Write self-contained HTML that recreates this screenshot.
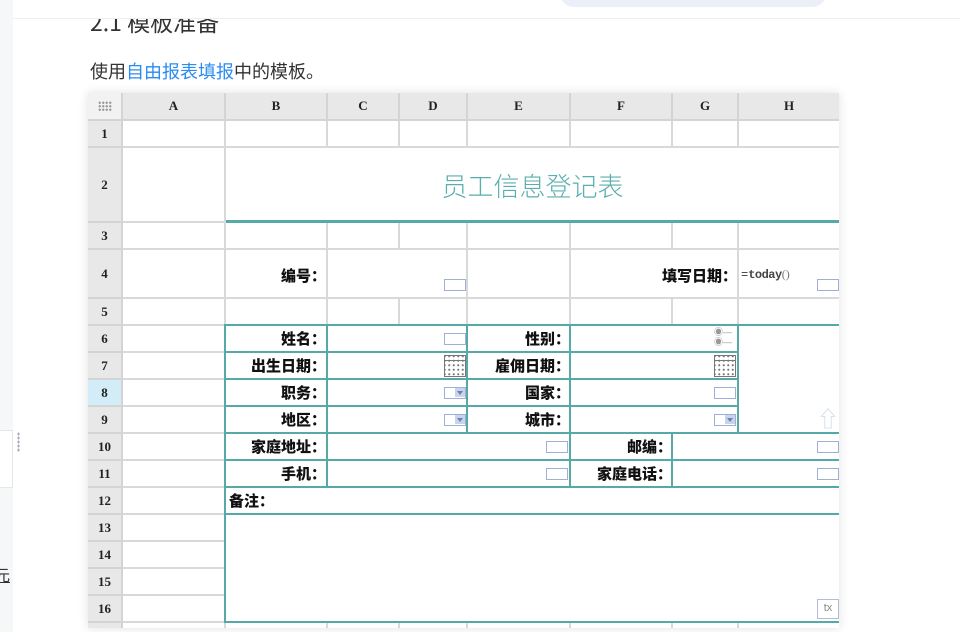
<!DOCTYPE html>
<html><head><meta charset="utf-8"><style>
*{margin:0;padding:0;box-sizing:border-box}
body{width:960px;height:632px;overflow:hidden;background:#fff;position:relative;font-family:"Liberation Sans","Noto Sans CJK SC",sans-serif}
.a{position:absolute}
.c{position:absolute;border-right:2px solid #d9d9d9;border-bottom:2px solid #d9d9d9;background:#fff}
.h{position:absolute;background:#e8e8e8;border-right:2px solid #d4d4d4;border-bottom:2px solid #d4d4d4;font-family:"Liberation Serif",serif;font-weight:bold;font-size:13px;color:#222;display:flex;align-items:center;justify-content:center}
.t{position:absolute;border-right:2px solid #55aaa7;border-bottom:2px solid #55aaa7}
.l{position:absolute;font-family:"Noto Sans CJK SC",sans-serif;font-weight:900;font-size:15px;color:#111;text-align:right;line-height:27px;padding-right:0px}
.bx{position:absolute;width:22px;height:12px;border:1.5px solid #9fb0d6;background:#fff}
.dd{position:absolute;width:22px;height:12px;border:1.5px solid #9fb0d6;background:#fff}
.dd:after{content:"";position:absolute;right:0;top:0;width:10px;height:9px;background:#c9d3ea}
.dd:before{content:"";position:absolute;right:2px;top:3px;border-left:3px solid transparent;border-right:3px solid transparent;border-top:4px solid #6a7fb8;z-index:1}
.cal{position:absolute;width:22px;height:22px;border:1.5px solid #777;background:#fff;background-image:radial-gradient(#777 0.9px,transparent 1.2px);background-size:4.5px 4.5px;background-position:2px 7px}
.cal:before{content:"";position:absolute;left:0;right:0;top:0;height:4px;border-bottom:1px solid #777}
</style></head><body>
<div class="a" style="left:0;top:0;width:13px;height:632px;background:#f6f7f9"></div>
<div class="a" style="left:0;top:430px;width:13px;height:58px;background:#fff;border:1px solid #e6e6e6;border-left:none"></div>
<div class="a" style="left:17px;top:432px;width:3px;height:20px;background-image:radial-gradient(#aab 1px,transparent 1.3px);background-size:3px 4px"></div>
<div class="a" style="left:-6px;top:562px;font-size:16px;color:#333;text-decoration:underline;font-family:'Noto Sans CJK SC',sans-serif">元</div>
<div class="a" style="left:13px;top:0;width:947px;height:19px;background:#fff;border-bottom:1px solid #eceef2;z-index:3"></div>
<div class="a" style="left:560px;top:-20px;width:266px;height:27px;background:#ebf0f8;border-radius:14px;z-index:4"></div>
<div class="a" style="left:90px;top:4px;font-size:23px;color:#333;font-family:'Noto Sans CJK SC',sans-serif;z-index:1">2.1 模板准备</div>
<div class="a" style="left:90px;top:58px;font-size:18px;color:#333;font-family:'Noto Sans CJK SC',sans-serif">使用<span style="color:#2a8cf0">自由报表填报</span>中的模板。</div>
<div class="a" style="left:88px;top:93px;width:751px;height:535px;background:#fff;box-shadow:0 0 10px rgba(0,0,0,.12)"></div>
<div class="h" style="left:88px;top:93px;width:35px;height:28px;background:#f2f2f2"><span style="width:14px;height:10px;background-image:radial-gradient(#999 1px,transparent 1.3px);background-size:3.5px 3.5px"></span></div>
<div class="h" style="left:123px;top:93px;width:103px;height:28px">A</div>
<div class="h" style="left:226px;top:93px;width:102px;height:28px">B</div>
<div class="h" style="left:328px;top:93px;width:72px;height:28px">C</div>
<div class="h" style="left:400px;top:93px;width:68px;height:28px">D</div>
<div class="h" style="left:468px;top:93px;width:103px;height:28px">E</div>
<div class="h" style="left:571px;top:93px;width:102px;height:28px">F</div>
<div class="h" style="left:673px;top:93px;width:66px;height:28px">G</div>
<div class="h" style="left:739px;top:93px;width:100px;height:28px;border-right:none">H</div>
<div class="h" style="left:88px;top:121px;width:35px;height:27px">1</div>
<div class="h" style="left:88px;top:148px;width:35px;height:75px">2</div>
<div class="h" style="left:88px;top:223px;width:35px;height:27px">3</div>
<div class="h" style="left:88px;top:250px;width:35px;height:49px">4</div>
<div class="h" style="left:88px;top:299px;width:35px;height:27px">5</div>
<div class="h" style="left:88px;top:326px;width:35px;height:27px">6</div>
<div class="h" style="left:88px;top:353px;width:35px;height:27px">7</div>
<div class="h" style="left:88px;top:380px;width:35px;height:27px;background:#d3edf8">8</div>
<div class="h" style="left:88px;top:407px;width:35px;height:27px">9</div>
<div class="h" style="left:88px;top:434px;width:35px;height:27px">10</div>
<div class="h" style="left:88px;top:461px;width:35px;height:27px">11</div>
<div class="h" style="left:88px;top:488px;width:35px;height:27px">12</div>
<div class="h" style="left:88px;top:515px;width:35px;height:27px">13</div>
<div class="h" style="left:88px;top:542px;width:35px;height:27px">14</div>
<div class="h" style="left:88px;top:569px;width:35px;height:27px">15</div>
<div class="h" style="left:88px;top:596px;width:35px;height:27px">16</div>
<div class="h" style="left:88px;top:623px;width:35px;height:5px;border-bottom:none"></div>
<div class="c" style="left:123px;top:121px;width:103px;height:27px"></div>
<div class="c" style="left:226px;top:121px;width:102px;height:27px"></div>
<div class="c" style="left:328px;top:121px;width:72px;height:27px"></div>
<div class="c" style="left:400px;top:121px;width:68px;height:27px"></div>
<div class="c" style="left:468px;top:121px;width:103px;height:27px"></div>
<div class="c" style="left:571px;top:121px;width:102px;height:27px"></div>
<div class="c" style="left:673px;top:121px;width:66px;height:27px"></div>
<div class="c" style="left:739px;top:121px;width:100px;height:27px;border-right:none"></div>
<div class="c" style="left:123px;top:148px;width:103px;height:75px"></div>
<div class="c" style="left:226px;top:148px;width:613px;height:75px;border-right:none;border-bottom:3px solid #55aaa7"></div>
<div class="a" style="left:226px;top:167px;width:613px;text-align:center;font-size:26px;color:#5aaeae;font-family:'Noto Sans CJK SC',sans-serif;font-weight:300">员工信息登记表</div>
<div class="c" style="left:123px;top:223px;width:103px;height:27px"></div>
<div class="c" style="left:226px;top:223px;width:102px;height:27px"></div>
<div class="c" style="left:328px;top:223px;width:72px;height:27px"></div>
<div class="c" style="left:400px;top:223px;width:68px;height:27px"></div>
<div class="c" style="left:468px;top:223px;width:103px;height:27px"></div>
<div class="c" style="left:571px;top:223px;width:102px;height:27px"></div>
<div class="c" style="left:673px;top:223px;width:66px;height:27px"></div>
<div class="c" style="left:739px;top:223px;width:100px;height:27px;border-right:none"></div>
<div class="c" style="left:123px;top:250px;width:103px;height:49px"></div>
<div class="c" style="left:226px;top:250px;width:102px;height:49px"></div>
<div class="c" style="left:328px;top:250px;width:140px;height:49px"></div>
<div class="c" style="left:468px;top:250px;width:103px;height:49px"></div>
<div class="c" style="left:571px;top:250px;width:168px;height:49px"></div>
<div class="c" style="left:739px;top:250px;width:100px;height:49px;border-right:none"></div>
<div class="l" style="left:226px;top:262px;width:100px">编号：</div>
<div class="bx" style="left:444px;top:279px"></div>
<div class="l" style="left:571px;top:262px;width:166px">填写日期：</div>
<div class="a" style="left:741px;top:267px;font-family:'Liberation Mono',monospace;font-size:12px;color:#333">=<span style="color:#444;font-weight:bold;letter-spacing:-.5px">today</span><span style="color:#777;font-family:'Liberation Serif',serif">()</span></div>
<div class="bx" style="left:817px;top:279px"></div>
<div class="c" style="left:123px;top:299px;width:103px;height:27px"></div>
<div class="c" style="left:226px;top:299px;width:102px;height:27px"></div>
<div class="c" style="left:328px;top:299px;width:72px;height:27px"></div>
<div class="c" style="left:400px;top:299px;width:68px;height:27px"></div>
<div class="c" style="left:468px;top:299px;width:103px;height:27px"></div>
<div class="c" style="left:571px;top:299px;width:102px;height:27px"></div>
<div class="c" style="left:673px;top:299px;width:66px;height:27px"></div>
<div class="c" style="left:739px;top:299px;width:100px;height:27px;border-right:none"></div>
<div class="c" style="left:123px;top:326px;width:103px;height:27px"></div>
<div class="c" style="left:123px;top:353px;width:103px;height:27px"></div>
<div class="c" style="left:123px;top:380px;width:103px;height:27px"></div>
<div class="c" style="left:123px;top:407px;width:103px;height:27px"></div>
<div class="c" style="left:123px;top:434px;width:103px;height:27px"></div>
<div class="c" style="left:123px;top:461px;width:103px;height:27px"></div>
<div class="c" style="left:123px;top:488px;width:103px;height:27px"></div>
<div class="c" style="left:123px;top:515px;width:103px;height:27px"></div>
<div class="c" style="left:123px;top:542px;width:103px;height:27px"></div>
<div class="c" style="left:123px;top:569px;width:103px;height:27px"></div>
<div class="c" style="left:123px;top:596px;width:103px;height:27px"></div>
<div class="c" style="left:123px;top:623px;width:103px;height:5px;border-bottom:none"></div>
<div class="c" style="left:226px;top:623px;width:102px;height:5px;border-bottom:none"></div>
<div class="c" style="left:328px;top:623px;width:72px;height:5px;border-bottom:none"></div>
<div class="c" style="left:400px;top:623px;width:68px;height:5px;border-bottom:none"></div>
<div class="c" style="left:468px;top:623px;width:103px;height:5px;border-bottom:none"></div>
<div class="c" style="left:571px;top:623px;width:102px;height:5px;border-bottom:none"></div>
<div class="c" style="left:673px;top:623px;width:66px;height:5px;border-bottom:none"></div>
<!-- teal region background + outer lines -->
<div class="a" style="left:224px;top:324px;width:615px;height:299px;background:#fff;border-left:2px solid #55aaa7;border-top:2px solid #55aaa7"></div>
<div class="t" style="left:226px;top:326px;width:102px;height:27px"></div>
<div class="t" style="left:226px;top:353px;width:102px;height:27px"></div>
<div class="t" style="left:226px;top:380px;width:102px;height:27px"></div>
<div class="t" style="left:226px;top:407px;width:102px;height:27px"></div>
<div class="t" style="left:328px;top:326px;width:140px;height:27px"></div>
<div class="t" style="left:328px;top:353px;width:140px;height:27px"></div>
<div class="t" style="left:328px;top:380px;width:140px;height:27px"></div>
<div class="t" style="left:328px;top:407px;width:140px;height:27px"></div>
<div class="t" style="left:468px;top:326px;width:103px;height:27px"></div>
<div class="t" style="left:468px;top:353px;width:103px;height:27px"></div>
<div class="t" style="left:468px;top:380px;width:103px;height:27px"></div>
<div class="t" style="left:468px;top:407px;width:103px;height:27px"></div>
<div class="t" style="left:571px;top:326px;width:168px;height:27px"></div>
<div class="t" style="left:571px;top:353px;width:168px;height:27px"></div>
<div class="t" style="left:571px;top:380px;width:168px;height:27px"></div>
<div class="t" style="left:571px;top:407px;width:168px;height:27px"></div>
<div class="t" style="left:739px;top:326px;width:100px;height:108px;border-right:none"></div>
<div class="t" style="left:226px;top:434px;width:102px;height:27px"></div>
<div class="t" style="left:226px;top:461px;width:102px;height:27px"></div>
<div class="t" style="left:328px;top:434px;width:243px;height:27px"></div>
<div class="t" style="left:328px;top:461px;width:243px;height:27px"></div>
<div class="t" style="left:571px;top:434px;width:102px;height:27px"></div>
<div class="t" style="left:571px;top:461px;width:102px;height:27px"></div>
<div class="t" style="left:673px;top:434px;width:166px;height:27px;border-right:none"></div>
<div class="t" style="left:673px;top:461px;width:166px;height:27px;border-right:none"></div>
<div class="t" style="left:226px;top:488px;width:613px;height:27px;border-right:none"></div>
<div class="t" style="left:226px;top:515px;width:613px;height:108px;border-right:none"></div>
<div class="l" style="left:226px;top:325px;width:100px">姓名：</div>
<div class="l" style="left:226px;top:352px;width:100px">出生日期：</div>
<div class="l" style="left:226px;top:379px;width:100px">职务：</div>
<div class="l" style="left:226px;top:406px;width:100px">地区：</div>
<div class="l" style="left:468px;top:325px;width:102px">性别：</div>
<div class="l" style="left:468px;top:352px;width:102px">雇佣日期：</div>
<div class="l" style="left:468px;top:379px;width:102px">国家：</div>
<div class="l" style="left:468px;top:406px;width:102px">城市：</div>
<div class="l" style="left:226px;top:433px;width:100px">家庭地址：</div>
<div class="l" style="left:226px;top:460px;width:100px">手机：</div>
<div class="l" style="left:570px;top:433px;width:102px">邮编：</div>
<div class="l" style="left:570px;top:460px;width:102px">家庭电话：</div>
<div class="l" style="left:229px;top:487px;text-align:left">备注：</div>
<div class="bx" style="left:444px;top:333px"></div>
<div class="cal" style="left:444px;top:355px"></div>
<div class="dd" style="left:444px;top:387px"></div>
<div class="dd" style="left:444px;top:414px"></div>
<div class="a" style="left:714px;top:327px;font-size:9px;color:#999;line-height:10px">◉—<br>◉—</div>
<div class="cal" style="left:714px;top:355px"></div>
<div class="bx" style="left:714px;top:387px"></div>
<div class="dd" style="left:714px;top:414px"></div>
<div class="a" style="left:817px;top:408px;font-size:22px;color:#cfe0ea;line-height:24px">⇧</div>
<div class="bx" style="left:546px;top:441px"></div>
<div class="bx" style="left:546px;top:468px"></div>
<div class="bx" style="left:817px;top:441px"></div>
<div class="bx" style="left:817px;top:468px"></div>
<div class="a" style="left:817px;top:599px;width:22px;height:20px;border:1.5px solid #b0bcd8;background:#fff;font-size:11px;color:#888;line-height:16px;text-align:center">tx</div>
</body></html>
